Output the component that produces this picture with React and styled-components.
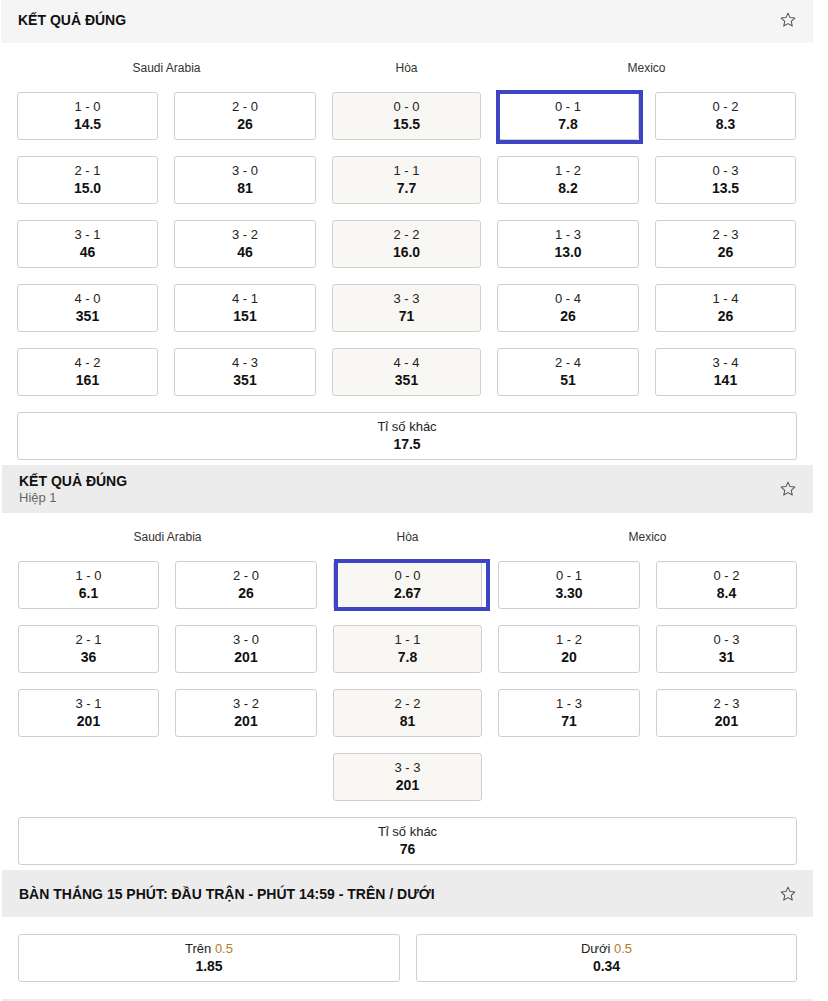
import React from "react";
import styled, { createGlobalStyle } from "styled-components";

const GlobalStyle = createGlobalStyle`
  body {
    margin: 0;
    background: #fff;
    font-family: "Liberation Sans", Arial, sans-serif;
    color: #111;
  }
`;

const Page = styled.div`
  width: 812px;
  padding-left: 1px;
  display: flex;
  flex-direction: column;
  gap: 5px;
`;

const Market = styled.section`
  padding-left: ${(p) => p.$shift}px;
`;

const Header = styled.div`
  display: flex;
  align-items: center;
  justify-content: space-between;
  height: ${(p) => p.$height}px;
  padding: 0 16px ${(p) => p.$lift || 0}px 17px;
  background: ${(p) => p.$bg};
  box-sizing: border-box;
`;

const HeaderText = styled.div`
  display: flex;
  flex-direction: column;
`;

const Title = styled.div`
  font-size: 14px;
  line-height: 16px;
  font-weight: 700;
  color: #111;
  text-transform: uppercase;
`;

const Subtitle = styled.div`
  font-size: 13px;
  line-height: 17px;
  color: #666;
`;

const StarButton = styled.span`
  display: flex;
  width: 18px;
  height: 18px;
  color: #555;
`;

const Body = styled.div`
  padding: ${(p) => p.$top}px 16px 0 16px;
  display: flex;
  flex-direction: column;
  gap: 16px;
`;

const Grid = styled.div`
  display: grid;
  grid-template-columns: 141px 142px 149px 142px 141px;
  column-gap: 16px;
  row-gap: 16px;
`;

const Labels = styled.div`
  display: grid;
  grid-template-columns: 299px 149px 299px;
  column-gap: 16px;
  height: 17px;
  align-items: center;
  font-size: 12px;
  color: #333;
  text-align: center;
`;

const Odd = styled.div`
  position: relative;
  height: 48px;
  box-sizing: border-box;
  border: 1px solid #cfcfcf;
  border-radius: 3px;
  background: ${(p) => (p.$draw ? "#f8f7f4" : "#fff")};
  display: flex;
  flex-direction: column;
  align-items: center;
  justify-content: center;
  grid-column: ${(p) => p.$col || "auto"};
`;

const Highlight = styled.span`
  position: absolute;
  top: ${(p) => p.$box[0]}px;
  right: ${(p) => p.$box[1]}px;
  bottom: ${(p) => p.$box[2]}px;
  left: ${(p) => p.$box[3]}px;
  border: 4px solid #3d45c4;
  pointer-events: none;
`;

const Score = styled.div`
  font-size: 13px;
  line-height: 16px;
  color: #222;
`;

const Price = styled.div`
  font-size: 14px;
  line-height: 18px;
  font-weight: 700;
  color: #111;
`;

const Line = styled.span`
  color: #b57a2c;
`;

const Pair = styled.div`
  display: grid;
  grid-template-columns: 382px 381px;
  column-gap: 16px;
`;

const BottomBar = styled.div`
  height: 4px;
  margin-top: 17px;
  background: #ececec;
`;

const Star = () => (
  <StarButton>
    <svg viewBox="0 0 24 24" width="18" height="18" fill="none" stroke="currentColor" strokeWidth="1.4" strokeLinejoin="round">
      <path d="M12 2.8l2.7 6 6.4.6-4.8 4.3 1.4 6.4L12 16.8l-5.7 3.3 1.4-6.4-4.8-4.3 6.4-.6z" />
    </svg>
  </StarButton>
);

const first = [
  [["1 - 0", "14.5"], ["2 - 0", "26"], ["0 - 0", "15.5"], ["0 - 1", "7.8"], ["0 - 2", "8.3"]],
  [["2 - 1", "15.0"], ["3 - 0", "81"], ["1 - 1", "7.7"], ["1 - 2", "8.2"], ["0 - 3", "13.5"]],
  [["3 - 1", "46"], ["3 - 2", "46"], ["2 - 2", "16.0"], ["1 - 3", "13.0"], ["2 - 3", "26"]],
  [["4 - 0", "351"], ["4 - 1", "151"], ["3 - 3", "71"], ["0 - 4", "26"], ["1 - 4", "26"]],
  [["4 - 2", "161"], ["4 - 3", "351"], ["4 - 4", "351"], ["2 - 4", "51"], ["3 - 4", "141"]],
];

const half = [
  [["1 - 0", "6.1"], ["2 - 0", "26"], ["0 - 0", "2.67"], ["0 - 1", "3.30"], ["0 - 2", "8.4"]],
  [["2 - 1", "36"], ["3 - 0", "201"], ["1 - 1", "7.8"], ["1 - 2", "20"], ["0 - 3", "31"]],
  [["3 - 1", "201"], ["3 - 2", "201"], ["2 - 2", "81"], ["1 - 3", "71"], ["2 - 3", "201"]],
  [null, null, ["3 - 3", "201"], null, null],
];

const ScoreGrid = ({ rows, selected }) => (
  <Grid>
    {rows.flatMap((row, r) =>
      row.map((cell, c) => {
        if (!cell) return null;
        const sel = selected && selected.key === cell[0];
        return (
          <Odd key={`${r}-${c}`} $draw={c === 2} $col={c + 1}>
            <Score>{cell[0]}</Score>
            <Price>{cell[1]}</Price>
            {sel && <Highlight $box={selected.box} />}
          </Odd>
        );
      })
    )}
  </Grid>
);

const CorrectScore = ({ rows, selected, other, shift, headerBg, subtitle, height, lift, top }) => (
  <Market $shift={shift}>
    <Header $height={height} $bg={headerBg} $lift={lift}>
      <HeaderText>
        <Title>Kết quả đúng</Title>
        {subtitle && <Subtitle>{subtitle}</Subtitle>}
      </HeaderText>
      <Star />
    </Header>
    <Body $top={top}>
      <Labels>
        <span>Saudi Arabia</span>
        <span>Hòa</span>
        <span>Mexico</span>
      </Labels>
      <ScoreGrid rows={rows} selected={selected} />
      <Odd>
        <Score>Tỉ số khác</Score>
        <Price>{other}</Price>
      </Odd>
    </Body>
  </Market>
);

const App = () => (
  <Page>
    <GlobalStyle />
    <CorrectScore
      rows={first}
      other="17.5"
      shift={0}
      headerBg="#f5f5f5"
      height={43}
      lift={3}
      top={16}
      selected={{ key: "0 - 1", box: [-3, -5, -5, -2] }}
    />
    <CorrectScore
      rows={half}
      other="76"
      shift={1}
      headerBg="#ececec"
      subtitle="Hiệp 1"
      height={48}
      top={15}
      selected={{ key: "0 - 0", box: [-3, -9, -3, 0] }}
    />
    <Market $shift={1}>
      <Header $height={47} $bg="#ececec">
        <Title>Bàn thắng 15 phút: Đầu trận - Phút 14:59 - Trên / Dưới</Title>
        <Star />
      </Header>
      <Body $top={17}>
        <Pair>
          <Odd>
            <Score>
              Trên <Line>0.5</Line>
            </Score>
            <Price>1.85</Price>
          </Odd>
          <Odd>
            <Score>
              Dưới <Line>0.5</Line>
            </Score>
            <Price>0.34</Price>
          </Odd>
        </Pair>
      </Body>
      <BottomBar />
    </Market>
  </Page>
);

export default App;
